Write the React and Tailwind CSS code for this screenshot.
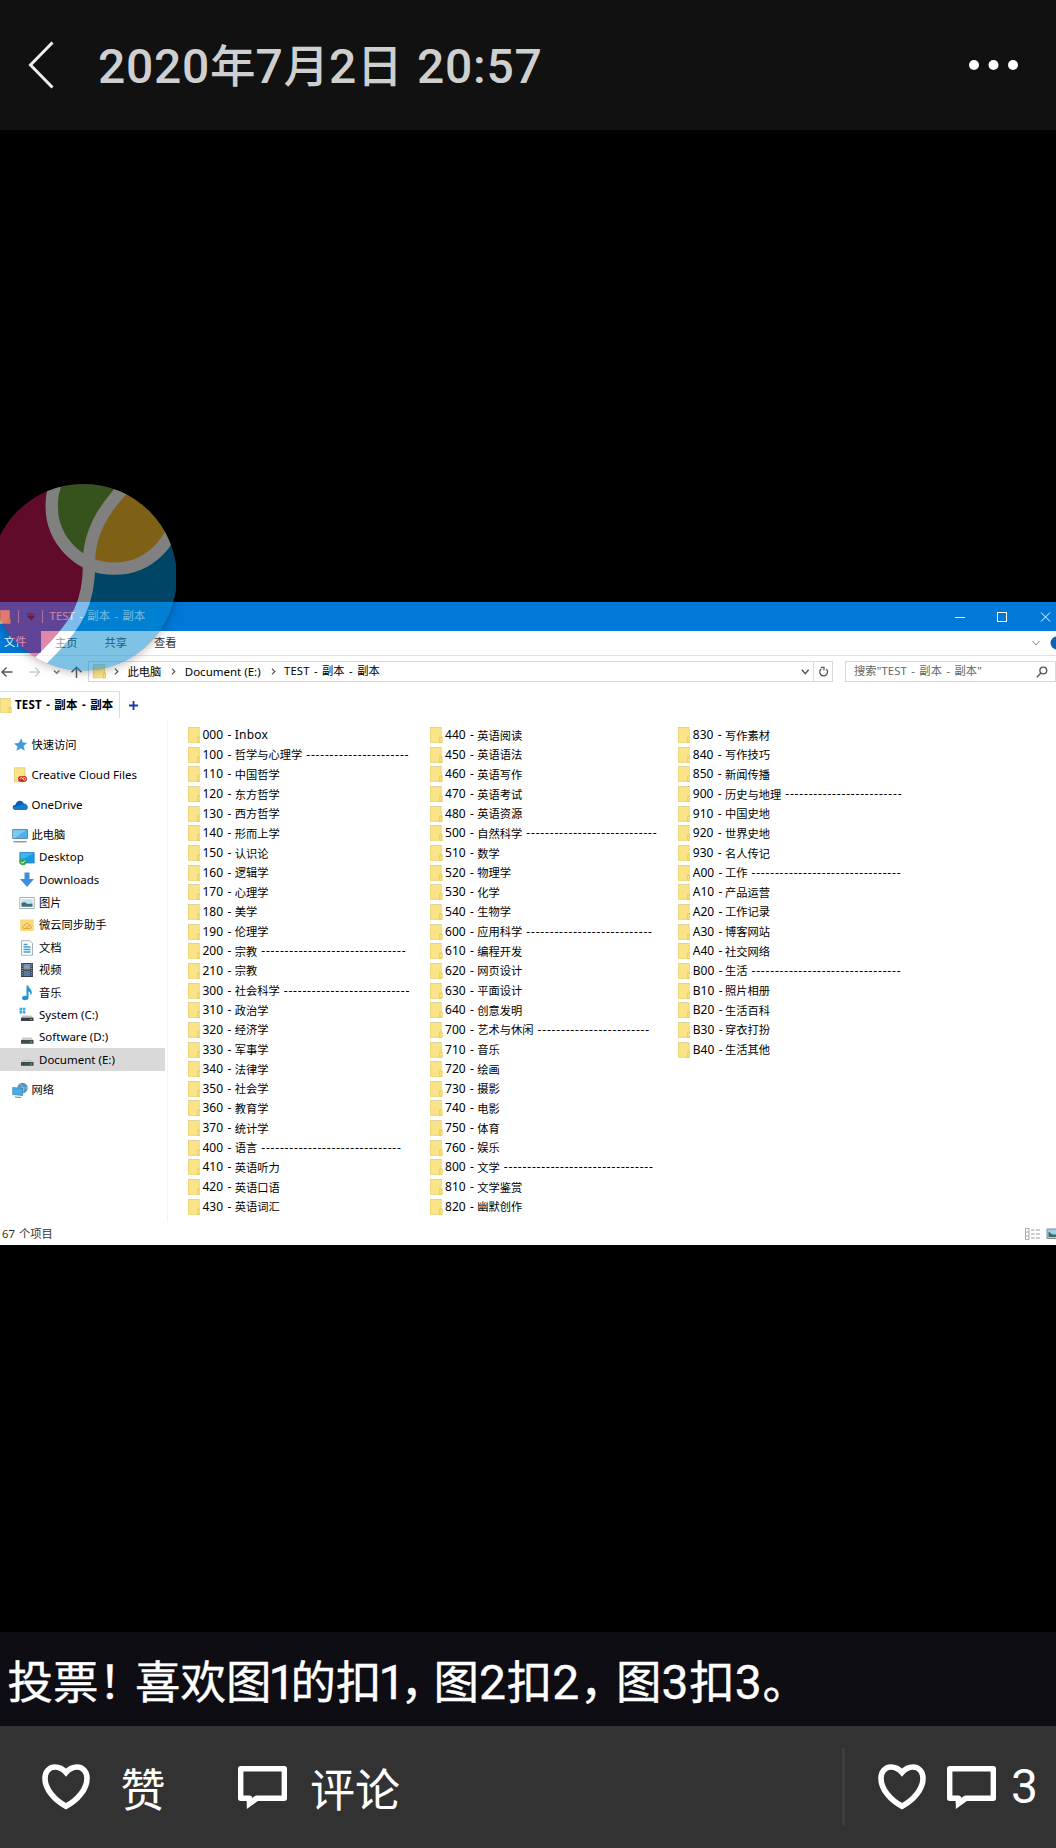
import React from "react";

const COLUMNS = [
  [
    ["000", "Inbox"], ["100", "哲学与心理学", 22], ["110", "中国哲学"], ["120", "东方哲学"], ["130", "西方哲学"],
    ["140", "形而上学"], ["150", "认识论"], ["160", "逻辑学"], ["170", "心理学"], ["180", "美学"],
    ["190", "伦理学"], ["200", "宗教", 31], ["210", "宗教"], ["300", "社会科学", 27], ["310", "政治学"],
    ["320", "经济学"], ["330", "军事学"], ["340", "法律学"], ["350", "社会学"], ["360", "教育学"],
    ["370", "统计学"], ["400", "语言", 30], ["410", "英语听力"], ["420", "英语口语"], ["430", "英语词汇"],
  ],
  [
    ["440", "英语阅读"], ["450", "英语语法"], ["460", "英语写作"], ["470", "英语考试"], ["480", "英语资源"],
    ["500", "自然科学", 28], ["510", "数学"], ["520", "物理学"], ["530", "化学"], ["540", "生物学"],
    ["600", "应用科学", 27], ["610", "编程开发"], ["620", "网页设计"], ["630", "平面设计"], ["640", "创意发明"],
    ["700", "艺术与休闲", 24], ["710", "音乐"], ["720", "绘画"], ["730", "摄影"], ["740", "电影"],
    ["750", "体育"], ["760", "娱乐"], ["800", "文学", 32], ["810", "文学鉴赏"], ["820", "幽默创作"],
  ],
  [
    ["830", "写作素材"], ["840", "写作技巧"], ["850", "新闻传播"], ["900", "历史与地理", 25], ["910", "中国史地"],
    ["920", "世界史地"], ["930", "名人传记"], ["A00", "工作", 32], ["A10", "产品运营"], ["A20", "工作记录"],
    ["A30", "博客网站"], ["A40", "社交网络"], ["B00", "生活", 32], ["B10", "照片相册"], ["B20", "生活百科"],
    ["B30", "穿衣打扮"], ["B40", "生活其他"],
  ],
];

function Folder({ className = "w-[12.5px] h-4" }) {
  return (
    <svg className={`shrink-0 ${className}`} viewBox="0 0 12.5 16" preserveAspectRatio="none">
      <rect x="0.4" y="0.5" width="10.8" height="14.8" fill="#fbe487" stroke="#e9d06a" strokeWidth="0.8" />
      <path d="M0.4 0.5H11.2" stroke="#d9d3a8" strokeWidth="0.9" />
      <rect x="9.8" y="10" width="2.3" height="5.3" fill="#fbe487" stroke="#e6c646" strokeWidth="0.8" />
    </svg>
  );
}

const Kai = ({ children, className = "" }) => (
  <span className={`font-['Noto_Sans_CJK_SC',sans-serif] text-[11.25px] ${className}`}>{children}</span>
);

function Entry({ code, name, dashes }) {
  const latin = name === "Inbox";
  return (
    <div className="flex h-[19.67px] items-center whitespace-pre text-black">
      <Folder />
      <span className="ml-[2.5px] w-[32.2px] text-[12px] [word-spacing:1.2px]">{code} -</span>
      {latin ? <span className="text-[12px] tracking-[0.25px]">{name}</span> : <Kai>{name}</Kai>}
      {dashes && <span className="ml-[4px] text-[12px] tracking-[0.82px]">{"-".repeat(dashes)}</span>}
    </div>
  );
}

const I = ({ children }) => (
  <svg className="mt-px h-4 w-4 shrink-0" viewBox="0 0 16 16" fill="none">{children}</svg>
);

const icons = {
  star: <I><path d="M9.300 2l1.100 3.700 4.100.5-3.200 2.600 1 4.400-3.400-2.300L4.800 13.300l1.100-3.900-3.200-2.700 4.200-.4z" fill="#3a9be0" stroke="#2b83c6" strokeWidth=".5" /></I>,
  cc: <I><path d="M2.500.8h10.500v14H2.500z" fill="#fbe487" stroke="#dfc363" strokeWidth=".7" /><path d="M6 11.500a2.500 2.500 0 0 1 4-2 3 3 0 0 1 5 2.500c0 2-1.500 3-3 3H8.500C7 15 6 13.500 6 11.500z" fill="#d8321f" /><path d="M8 12c0-1.800 2-1.800 3 0s3 1 2.500-.6-2.500-1-3 .6" stroke="#fff" strokeWidth=".7" /></I>,
  cloud: <I><path d="M3.500 13C-.5 12.500 0 7.800 3.500 7.700 4.500 3 10 2.500 11.800 6.500c4.500 0 5.200 6 1.400 6.500z" fill="#0f5cb0" /><path d="M1 10.500L11.800 7c4.500 0 5 6 1.400 6H3.500C2 12.800 1 12 1 10.500z" fill="#1583d8" opacity=".8" /></I>,
  pc: <I><path d="M.7 2.500h14.800v9H.7z" fill="#4db0ee" stroke="#5d8299" strokeWidth=".9" /><path d="M1 3h13L3 11H1z" fill="#85cff7" opacity=".8" /><path d="M1.500 14.800h13" stroke="#71838e" strokeWidth="1.200" /></I>,
  desktop: <I><path d="M.8 2.500h14.400v10.500H.8z" fill="#1b9ae4" stroke="#1878b4" strokeWidth=".7" /><path d="M1 3h14L2 10.500z" fill="#39b6ef" /><circle cx="4" cy="11.800" r="3.400" fill="#37a646" /><path d="M2.300 11.800l1.300 1.400 2.300-2.600" stroke="#fff" strokeWidth="1" /></I>,
  down: <I><path d="M5.500 .5h5v6.500H15L8 15 1 7h4.500z" fill="#3f8fd9" /></I>,
  pic: <I><path d="M.8 2.500h14.400v11H.8z" fill="#fff" stroke="#8f9aa2" strokeWidth=".8" /><path d="M2.500 4.200h11v7.500h-11z" fill="#c5dfec" /><path d="M2.500 8c2-1 4-1 6 1l5-.6v3.300h-11z" fill="#3f7277" /></I>,
  wy: <I><path d="M1.200 2.500h13.500v11.500H1.200z" fill="#f8d878" /><path d="M4.500 11.500c-1.500-1-.5-3 1-2.800.5-3 4.500-3 5-.2 2 0 2.200 3 .2 3zM7 11l3-2.500" stroke="#cf9532" strokeWidth=".8" /></I>,
  doc: <I><path d="M2.500.7h8.500l2.500 2.500v12H2.500z" fill="#fff" stroke="#8c9da6" strokeWidth=".8" /><path d="M4.500 4.500h4M4.500 7h7M4.500 9.500h7M4.500 12h7" stroke="#39a0ca" strokeWidth="1.400" /></I>,
  video: <I><path d="M2 1h12v14H2z" fill="#3a3e42" /><path d="M4.500 2h7v5.500h-7z" fill="#6d98cc" /><path d="M4.500 8.500h7V14h-7z" fill="#547aa6" /><path d="M3.200 1.500v13M12.800 1.500v13" stroke="#ddd" strokeWidth=".9" strokeDasharray="1 1.200" /><path d="M5 6l3-2.500L11 7z" fill="#d29142" /></I>,
  music: <I><path d="M7.500.5h1.800c.3 3.200 4 3.500 3.400 8-.2 1-.8 1.500-1.200 1.800.3-2.300-.8-3.300-2-3.700v6.300C9.500 15.600 3 16.200 3 13c0-2 2.500-2.700 4.500-1.900z" fill="#2793d9" /></I>,
  sys: <I><path d="M3.500 8.500h9L14.500 11H2z" fill="#c1c4c6" /><path d="M2 10.700h12.500v3.300H2z" fill="#3c4143" /><path d="M11 12.500h2" stroke="#4bd34f" /><path d="M.5.800h2.600v2.600H.5zM3.800.800h2.600v2.600H3.800zM.5 4h2.600v2.600H.5zM3.800 4h2.600v2.600H3.800z" fill="#27aeea" /></I>,
  drive: <I><path d="M3.500 7.500h9l2 3H2z" fill="#c8cbcc" /><path d="M2 10h12.500v3.800H2z" fill="#45494b" /><path d="M11 12h2" stroke="#4bd34f" /></I>,
  net: <I><circle cx="10.500" cy="6" r="5.200" fill="#5c93b9" /><path d="M7.500 2c3 1 5 5 3.500 9M6 6h9.500" stroke="#a9d0e6" strokeWidth=".7" /><path d="M.7 5.500l10 1v7l-10-1z" fill="#45aee8" stroke="#3a7fa6" strokeWidth=".7" /><path d="M3 15l6 .5" stroke="#5f7f92" /></I>,
};

function NavRow({ icon, label, nested, selected, gap, cjk }) {
  return (
    <div
      className={`flex h-[22.5px] w-[165px] items-center whitespace-nowrap text-black ${nested ? "pl-[19px]" : "pl-[11.5px]"} ${selected ? "bg-[#d9d9d9]" : ""} ${gap ? "mb-[7.4px]" : ""}`}
    >
      {icons[icon]}
      {cjk ? <Kai className="ml-[4px]">{label}</Kai> : <span className="ml-[4px] text-[11.5px]">{label}</span>}
    </div>
  );
}

function Sidebar() {
  return (
    <nav className="w-[167.5px] shrink-0 border-r border-[#f4f4f4] pt-[13.6px]">
      <NavRow icon="star" label="快速访问" gap cjk />
      <NavRow icon="cc" label="Creative Cloud Files" gap />
      <NavRow icon="cloud" label="OneDrive" gap />
      <NavRow icon="pc" label="此电脑" cjk />
      <NavRow icon="desktop" label="Desktop" nested />
      <NavRow icon="down" label="Downloads" nested />
      <NavRow icon="pic" label="图片" nested cjk />
      <NavRow icon="wy" label="微云同步助手" nested cjk />
      <NavRow icon="doc" label="文档" nested cjk />
      <NavRow icon="video" label="视频" nested cjk />
      <NavRow icon="music" label="音乐" nested cjk />
      <NavRow icon="sys" label="System (C:)" nested />
      <NavRow icon="drive" label="Software (D:)" nested />
      <NavRow icon="drive" label="Document (E:)" nested selected gap />
      <NavRow icon="net" label="网络" cjk />
    </nav>
  );
}

function Chevron({ className }) {
  return (
    <svg className={`h-[7px] w-[5px] shrink-0 ${className}`} viewBox="0 0 5 7" fill="none">
      <path d="M1 .7l2.800 2.800L1 6.300" stroke="#555" strokeWidth="1.200" />
    </svg>
  );
}

function FloatingBall() {
  return (
    <svg className="absolute -left-[10.3px] -top-[118.2px] h-[186.7px] w-[186.7px] opacity-50 drop-shadow-[0_2px_4px_rgba(0,0,0,0.5)]" viewBox="-31 40 560 560">
      <defs>
        <clipPath id="ball"><circle cx="249" cy="320" r="280" /></clipPath>
        <clipPath id="bowl"><circle cx="342" cy="106" r="187" /></clipPath>
      </defs>
      <g clipPath="url(#ball)">
        <rect x="-31" y="40" width="560" height="560" fill="#c01458" />
        <path d="M265 200C270 380 240 460 110 580L120 610H540V160H265z" fill="#0088cc" />
        <g clipPath="url(#bowl)">
          <rect x="100" y="0" width="450" height="330" fill="#6ea53a" />
          <path d="M375 40C300 130 268 190 267 300H560V0z" fill="#fcc22e" />
        </g>
        <circle cx="342" cy="106" r="188" fill="none" stroke="#fff" strokeWidth="37" />
        <path d="M375 46C300 125 270 190 266 262C270 390 240 460 105 585" fill="none" stroke="#fff" strokeWidth="37" />
      </g>
    </svg>
  );
}

function Explorer() {
  return (
    <section className="relative flex h-[643px] w-full flex-col bg-white font-['Noto_Sans','Noto_Sans_CJK_SC',sans-serif]">
      <div className="flex h-[29px] shrink-0 items-center overflow-hidden bg-[#0078d7] text-white">
        <Folder className="h-[14px] w-[10.5px]" />
        <span className="ml-[7px] h-[13px] w-px bg-white/60" />
        <svg className="ml-[8px] h-2 w-2" viewBox="0 0 8 8"><path d="M0 1h8M.5 3h7L4 7z" fill="#222" stroke="#222" /></svg>
        <span className="ml-[7px] h-[13px] w-px bg-white/60" />
        <span className="ml-[7px] whitespace-pre text-[11.25px] tracking-[0.12px] text-white/90 [word-spacing:1.3px]">TEST - 副本 - 副本</span>
        <svg className="ml-auto h-[14px] w-[105px] shrink-0" viewBox="0 0 105 14" fill="none" stroke="#fff">
          <path d="M4 7.500h10" />
          <rect x="46.500" y="2.500" width="9" height="9" />
          <path d="M90 2.500l9 9M99 2.500l-9 9" />
        </svg>
      </div>
      <div className="flex h-[24.5px] shrink-0 items-center overflow-hidden border-b border-[#e2e2e2] text-[#333]">
        <span className="flex h-[21.5px] w-[41px] items-center self-start bg-[#0078d7] pl-[4px] text-white"><Kai>文件</Kai></span>
        <Kai className="ml-[14px]">主页</Kai>
        <Kai className="ml-[27px]">共享</Kai>
        <Kai className="ml-[27px]">查看</Kai>
        <svg className="ml-auto h-3.5 w-[26px]" viewBox="0 0 26 14" fill="none">
          <path d="M2.500 5l3.500 4 3.500-4" stroke="#8b8b8b" />
          <circle cx="27" cy="7" r="6.500" fill="#0b62b4" />
        </svg>
      </div>
      <div className="flex h-[34.5px] shrink-0 items-center pb-[2.5px] text-black">
        <svg className="h-[12px] w-[88px] shrink-0" viewBox="0 0 88 12" fill="none" strokeWidth="1.400">
          <path d="M12.500 6H2M6.500 1.500L2 6l4.500 4.500" stroke="#555" />
          <path d="M29.500 6H39.500M35 1.500L39.500 6 35 10.500" stroke="#ccc" />
          <path d="M54 4.500l2.700 2.700 2.700-2.700" stroke="#777" />
          <path d="M76.500 12V1.500M71.500 6.300l5-5 5 5" stroke="#555" />
        </svg>
        <div className="flex h-[21.5px] w-[745px] shrink-0 items-center border border-[#d9d9d9] pl-[4px]">
          <Folder className="h-[14.5px] w-[13px]" />
          <Chevron className="ml-[7.5px]" />
          <Kai className="ml-[9px]">此电脑</Kai>
          <Chevron className="ml-[9.5px]" />
          <span className="ml-[9px] text-[11.5px]">Document (E:)</span>
          <Chevron className="ml-[10px]" />
          <span className="ml-[8.5px] whitespace-pre text-[11.25px] tracking-[0.12px] [word-spacing:1.3px]">TEST - 副本 - 副本</span>
          <svg className="ml-auto h-full w-[33px]" viewBox="0 0 33 20" fill="none">
            <path d="M2.500 8l3.500 4 3.500-4" stroke="#555" strokeWidth="1.500" />
            <path d="M14.500 0v20" stroke="#d9d9d9" />
            <path d="M22.500 7a4 4 0 1 0 5 .2M22 5.500h3.200v3.200" stroke="#555" strokeWidth="1.300" />
          </svg>
        </div>
        <div className="ml-[12px] flex h-[21.5px] flex-1 items-center border border-[#d9d9d9] pl-[8px] pr-[7px] text-[#666]">
          <span className="whitespace-pre text-[11.25px] tracking-[0.12px] [word-spacing:1.3px]">搜索"TEST - 副本 - 副本"</span>
          <svg className="ml-auto h-3 w-3" viewBox="0 0 12 12" fill="none" stroke="#555" strokeWidth="1.400">
            <circle cx="7.300" cy="4.500" r="3.400" /><path d="M5 7L.8 11.200" />
          </svg>
        </div>
      </div>
      <div className="flex h-[30px] shrink-0 items-start pt-[1px]">
        <div className="flex h-[27px] w-[120px] items-center border-r border-t border-[#dcdcdc]">
          <Folder className="h-[15px] w-[11.5px]" />
          <span className="ml-[3.5px] whitespace-pre text-[11.5px] font-bold tracking-[0.2px] text-black [word-spacing:1.1px]">TEST - 副本 - 副本</span>
        </div>
        <svg className="ml-[8px] mt-[9px] h-[11px] w-[11px]" viewBox="0 0 11 11"><path d="M5.500 1v9M1 5.500h9" stroke="#0c3e9c" strokeWidth="1.800" /></svg>
      </div>
      <div className="flex min-h-0 flex-1">
        <Sidebar />
        <main className="flex pl-[20px] pt-[5.2px]">
          {COLUMNS.map((column, i) => (
            <div key={i} className={i === 0 ? "w-[242.6px]" : "w-[247.7px]"}>
              {column.map(([code, name, dashes]) => (
                <Entry key={code} code={code} name={name} dashes={dashes} />
              ))}
            </div>
          ))}
        </main>
      </div>
      <footer className="flex h-[23px] shrink-0 items-center pl-[2px] pt-[2px] text-[11.25px] text-[#333]">
        <span className="tracking-[0.1px] [word-spacing:0.8px]">67 个项目</span>
        <svg className="-mt-[2px] ml-auto h-[14px] w-[32px]" viewBox="0 0 32 14" fill="none">
          <path d="M1.500 1.500h3.500v11H1.500zM1.500 5h3.500M1.500 9h3.500" stroke="#aaa" />
          <path d="M7 3h3.500M12 3h4M7 7h3.500M12 7h4M7 11h3.500M12 11h4" stroke="#999" />
          <path d="M23 2h12v9.500h-12z" fill="#9fd0ef" stroke="#7f8c96" />
          <path d="M24.500 4.500l4 3h6v2.500H24.500z" fill="#3c6e5b" />
        </svg>
      </footer>
      <FloatingBall />
    </section>
  );
}

function Heart({ className = "" }) {
  return (
    <svg className={`h-[46px] w-[48px] shrink-0 ${className}`} viewBox="0 0 48 46" fill="none">
      <path d="M24 8.500C20.500 4.500 16.500 3 13 3 7 3 3 8 3 14.500 3 25.500 13 36.500 24 42.300 35 36.500 45 25.500 45 14.500 45 8 41 3 35 3c-3.500 0-7.500 1.500-11 5.500z" stroke="#fff" strokeWidth="5.600" />
    </svg>
  );
}

function Bubble({ className = "" }) {
  return (
    <svg className={`h-[43px] w-[49px] shrink-0 ${className}`} viewBox="0 0 49 43" fill="none">
      <path d="M2.700 2.700h43.600v29.600H18.500L11.500 37v-4.700H2.700z" stroke="#fff" strokeWidth="5.400" strokeLinejoin="round" />
      <path d="M8.800 33v10l11-8z" fill="#fff" />
    </svg>
  );
}

const Num = ({ children, className = "" }) => (
  <span className={`font-['Roboto',sans-serif] text-[48px] ${className}`}>{children}</span>
);

export default function App() {
  return (
    <div className="flex h-[1848px] w-[1056px] flex-col overflow-hidden bg-black font-['Noto_Sans_CJK_SC',sans-serif] text-white">
      <header className="flex h-[130px] shrink-0 items-center bg-[#111111]">
        <svg className="ml-[27px] h-[48px] w-[28px]" viewBox="0 0 28 48" fill="none"><path d="M25.500 1.500L3.500 24l22 22.500" stroke="#eee" strokeWidth="3" /></svg>
        <h1 className="ml-[43px] mt-[2px] flex items-baseline whitespace-pre text-[45.5px] font-medium leading-none text-[#cfcfcf]">
          <Num className="tracking-[0.7px]">2020</Num>年<Num className="tracking-[0.7px]">7</Num>月<Num className="tracking-[0.7px]">2</Num>日<Num className="tracking-[0.7px] [word-spacing:2px]"> 20:57</Num>
        </h1>
        <svg className="ml-auto mr-[37px] h-[12px] w-[51px]" viewBox="0 0 51 12" fill="#fff"><circle cx="6" cy="6" r="5" /><circle cx="25.500" cy="6" r="5" /><circle cx="45" cy="6" r="5" /></svg>
      </header>
      <div className="h-[472px] shrink-0" />
      <Explorer />
      <div className="h-[387px] shrink-0" />
      <p className="h-[94px] shrink-0 whitespace-nowrap bg-[#0e0d13] pl-[7.5px] pt-[3px] text-[45.5px] leading-[88px] [-webkit-text-stroke:0.4px_#fff]">
        投票<span className="tracking-[-9px]">！</span>喜欢图<Num className="-ml-[3px] tracking-[-5px]">1</Num>的扣<Num className="-ml-[3px] tracking-[-5px]">1</Num><span className="tracking-[-12.5px]">，</span>图<Num className="tracking-[0.7px]">2</Num>扣<Num className="tracking-[0.7px]">2</Num><span className="tracking-[-9.5px]">，</span>图<Num className="tracking-[0.7px]">3</Num>扣<Num className="tracking-[0.7px]">3</Num>。
      </p>
      <footer className="flex h-[122px] shrink-0 items-center bg-[#323232] text-[45px] leading-none">
        <Heart className="ml-[42px]" />
        <span className="ml-[30.5px]">赞</span>
        <Bubble className="ml-[72.5px]" />
        <span className="ml-[23px]">评论</span>
        <span className="ml-auto h-[78px] w-[3px] bg-[#3d3d3d]" />
        <Heart className="ml-[33px]" />
        <Bubble className="ml-[21px]" />
        <Num className="ml-[15px] mr-[18px]">3</Num>
      </footer>
    </div>
  );
}
